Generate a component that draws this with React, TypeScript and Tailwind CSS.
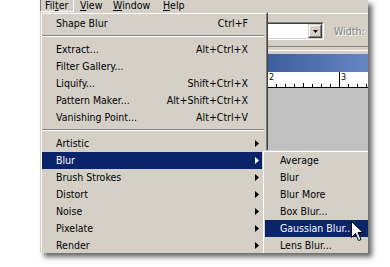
import React from "react";

type Item =
  | { label: string; shortcut?: string; sub?: boolean; active?: boolean }
  | "sep";

const mainItems: Item[] = [
  { label: "Shape Blur", shortcut: "Ctrl+F" },
  "sep",
  { label: "Extract...", shortcut: "Alt+Ctrl+X" },
  { label: "Filter Gallery..." },
  { label: "Liquify...", shortcut: "Shift+Ctrl+X" },
  { label: "Pattern Maker...", shortcut: "Alt+Shift+Ctrl+X" },
  { label: "Vanishing Point...", shortcut: "Alt+Ctrl+V" },
  "sep",
  { label: "Artistic", sub: true },
  { label: "Blur", sub: true, active: true },
  { label: "Brush Strokes", sub: true },
  { label: "Distort", sub: true },
  { label: "Noise", sub: true },
  { label: "Pixelate", sub: true },
  { label: "Render", sub: true },
];

const subItems = [
  { label: "Average" },
  { label: "Blur" },
  { label: "Blur More" },
  { label: "Box Blur..." },
  { label: "Gaussian Blur...", active: true },
  { label: "Lens Blur..." },
];

const Arrow = ({ white }: { white?: boolean }) => (
  <svg width="4" height="7" viewBox="0 0 4 7" className={white ? "fill-white" : "fill-black"}>
    <polygon points="0,0 4,3.5 0,7" />
  </svg>
);

const Cursor = () => (
  <svg width="14" height="21" viewBox="0 0 14 21" className="absolute left-[351px] top-[221px]">
    <path
      d="M0.5 0.5 V16.5 L4.5 12.5 L7.5 19.5 L10 18.5 L7 11.5 H12 Z"
      fill="white"
      stroke="black"
      strokeWidth="1"
      strokeLinejoin="miter"
    />
  </svg>
);

export default function App() {
  return (
    <div className="w-[390px] h-[267px] bg-white relative overflow-hidden text-[10.5px] text-black font-['DejaVu_Sans_Condensed','DejaVu_Sans',sans-serif]">
      <div className="ml-[40px] w-[328px] h-[253px] overflow-hidden relative flex flex-col bg-[#D4D0C8] shadow-[4px_4px_5px_rgba(0,0,0,0.6)]">
        {/* Menu bar */}
        <div className="h-[12px] shrink-0 flex items-start overflow-hidden">
          <div className="w-[34px] h-[12px] border-l border-r border-b border-l-[#808080] border-r-white border-b-white pl-[4px]">
            <div className="-mt-[1px] leading-[12px] whitespace-nowrap">
              Fil<span className="underline">t</span>er
            </div>
          </div>
          <div className="w-[39px] pl-[6px]">
            <div className="-mt-[1px] leading-[12px] whitespace-nowrap">
              <span className="underline">V</span>iew
            </div>
          </div>
          <div className="w-[50px]">
            <div className="-mt-[1px] leading-[12px] whitespace-nowrap">
              <span className="underline">W</span>indow
            </div>
          </div>
          <div className="w-[40px]">
            <div className="-mt-[1px] leading-[12px] whitespace-nowrap">
              <span className="underline">H</span>elp
            </div>
          </div>
        </div>

        {/* Body */}
        <div className="flex-1 min-h-0 flex">
          {/* Main dropdown menu */}
          <div className="w-[228px] shrink-0 self-start border border-t-[#D4D0C8] border-l-[#D4D0C8] border-r-[#404040] border-b-[#404040] bg-[#D4D0C8]">
            <div className="border border-t-white border-l-white border-r-[#808080] border-b-[#808080] pt-[1px]">
              {mainItems.map((it, i) =>
                it === "sep" ? (
                  <div key={i} className="h-[9px] pt-[3px] pr-[2px]">
                    <div className="h-[2px] border-t border-t-[#808080] border-b border-b-white" />
                  </div>
                ) : (
                  <div
                    key={i}
                    className={`h-[17px] flex items-center pl-[14px] whitespace-nowrap leading-[17px] ${
                      it.active ? "bg-[#0A246A] text-white" : ""
                    }`}
                  >
                    <span className="flex-1">{it.label}</span>
                    {it.shortcut && <span>{it.shortcut}</span>}
                    <span className="w-[18px] h-[17px] flex items-center pl-[7px]">
                      {it.sub && <Arrow white={it.active} />}
                    </span>
                  </div>
                )
              )}
            </div>
          </div>

          {/* Workspace */}
          <div className="flex-1 min-w-0 flex flex-col overflow-hidden">
            {/* Options bar */}
            <div className="h-[34px] shrink-0 bg-[#D4D0C8] flex flex-col">
              <div className="h-px bg-[#D4D0C8]" />
              <div className="h-px bg-white" />
              <div className="flex items-start mt-[8px]">
                <div className="-ml-[12px] w-[68px] h-[18px] shrink-0 border border-t-[#808080] border-l-[#808080] border-r-white border-b-white">
                  <div className="h-full border border-t-[#404040] border-l-[#404040] border-r-[#D4D0C8] border-b-[#D4D0C8] bg-white flex justify-end">
                    <div className="w-[14px] h-full border border-t-[#D4D0C8] border-l-[#D4D0C8] border-r-[#404040] border-b-[#404040] bg-[#D4D0C8]">
                      <div className="h-full border border-t-white border-l-white border-r-[#808080] border-b-[#808080] flex items-center justify-center">
                        <svg width="5" height="3" viewBox="0 0 5 3" className="fill-black">
                          <polygon points="0,0 5,0 2.5,3" />
                        </svg>
                      </div>
                    </div>
                  </div>
                </div>
                <span className="ml-[10px] leading-[18px] text-[#808080] whitespace-nowrap [text-shadow:1px_1px_0_#ffffff]">
                  Width:
                </span>
              </div>
            </div>
            <div className="h-px shrink-0 bg-[#808080]" />
            <div className="h-[3px] shrink-0 bg-[#D4D0C8]" />
            <div className="h-px shrink-0 bg-white" />
            <div className="h-[3px] shrink-0 bg-[#D4D0C8]" />
            {/* Document title bar */}
            <div className="h-[18px] shrink-0 bg-gradient-to-r from-[#3E5D9D] to-[#6786C4]" />
            {/* Ruler */}
            <div className="h-[16px] shrink-0 bg-white">
              <svg width="100" height="16" viewBox="0 0 100 16" className="block">
                <rect x="0" y="15" width="100" height="1" fill="#000" />
                {[8, 17, 26, 44, 53, 62, 80, 89, 98].map((x) => (
                  <rect key={x} x={x} y="12" width="1" height="3" fill="#000" />
                ))}
                <rect x="35" y="11" width="1" height="4" fill="#000" />
                <rect x="71" y="0" width="1" height="15" fill="#000" />
                <text x="1" y="8" fontSize="8" fontFamily="DejaVu Sans, sans-serif" fill="#000">
                  2
                </text>
                <text x="73" y="8" fontSize="8" fontFamily="DejaVu Sans, sans-serif" fill="#000">
                  3
                </text>
              </svg>
            </div>
            {/* Canvas area */}
            <div className="flex-1 bg-[#C0C0C0]" />
          </div>
        </div>

        {/* Blur submenu */}
        <div className="absolute left-[222px] top-[150px] w-[110px] border-l border-t border-l-[#D4D0C8] border-t-[#D4D0C8] bg-[#D4D0C8]">
          <div className="border-l border-t border-l-white border-t-white pl-[1px]">
            {subItems.map((it, i) => (
              <div
                key={i}
                className={`h-[17px] leading-[17px] pl-[15px] whitespace-nowrap ${
                  it.active ? "bg-[#0A246A] text-white" : ""
                }`}
              >
                {it.label}
              </div>
            ))}
          </div>
        </div>
      </div>
      <Cursor />
    </div>
  );
}
